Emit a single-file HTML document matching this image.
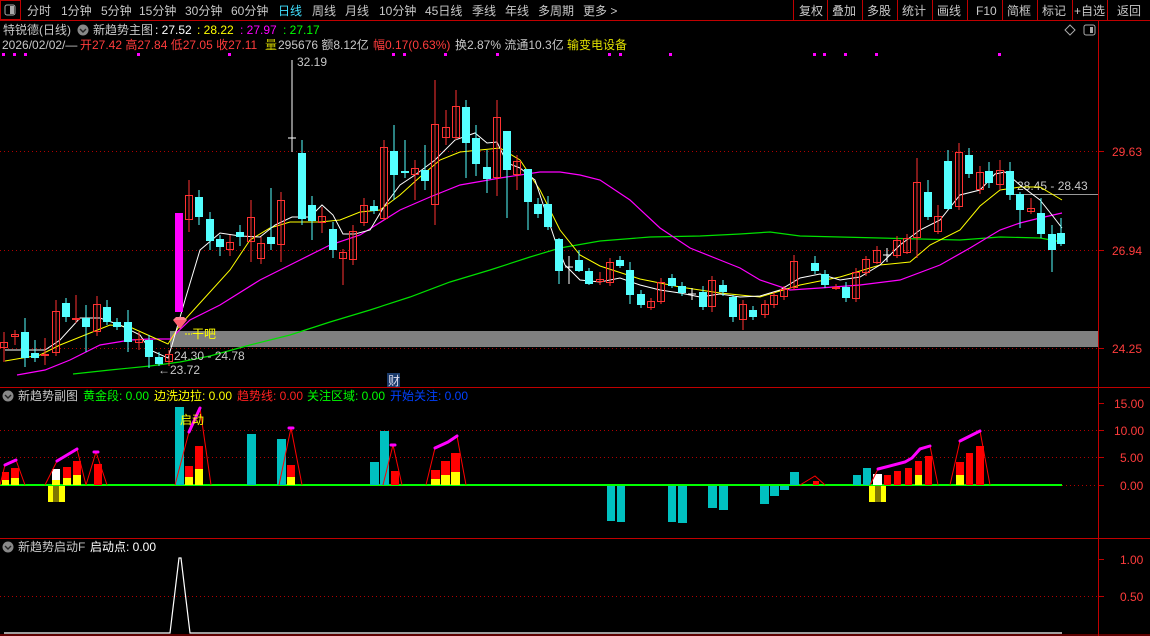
<!DOCTYPE html>
<html><head><meta charset="utf-8"><style>
html,body{margin:0;padding:0;background:#000;width:1150px;height:636px;overflow:hidden}
svg{display:block}
text{font-family:"Liberation Sans","Noto Sans CJK SC",sans-serif;font-size:12px}
</style></head><body>
<svg width="1150" height="636" viewBox="0 0 1150 636" xmlns="http://www.w3.org/2000/svg">
<rect width="1150" height="636" fill="#000"/>
<rect x="0.5" y="0.5" width="20" height="19" fill="none" stroke="#c00000"/>
<rect x="5" y="5" width="10" height="10" rx="2" fill="none" stroke="#aaa"/><rect x="10" y="6" width="4" height="8" fill="#aaa"/>
<line x1="0" y1="20.5" x2="1150" y2="20.5" stroke="#c00000"/>
<g fill="#c8c8c8">
<text x="27" y="15">分时</text><text x="61" y="15">1分钟</text><text x="101" y="15">5分钟</text><text x="139" y="15">15分钟</text><text x="185" y="15">30分钟</text><text x="231" y="15">60分钟</text>
<text x="278" y="15" fill="#40e0ff">日线</text><text x="312" y="15">周线</text><text x="345" y="15">月线</text><text x="379" y="15">10分钟</text><text x="425" y="15">45日线</text><text x="472" y="15">季线</text><text x="505" y="15">年线</text><text x="538" y="15">多周期</text><text x="583" y="15">更多 &gt;</text>
<text x="799" y="15">复权</text><text x="832" y="15">叠加</text><text x="867" y="15">多股</text><text x="902" y="15">统计</text><text x="937" y="15">画线</text><text x="976" y="15">F10</text><text x="1007" y="15">简框</text><text x="1042" y="15">标记</text><text x="1074" y="15">+自选</text><text x="1117" y="15">返回</text>
</g>
<g stroke="#c00000"><line x1="793.5" y1="0" x2="793.5" y2="20"/><line x1="827.5" y1="0" x2="827.5" y2="20"/><line x1="862.5" y1="0" x2="862.5" y2="20"/><line x1="897.5" y1="0" x2="897.5" y2="20"/><line x1="932.5" y1="0" x2="932.5" y2="20"/><line x1="967.5" y1="0" x2="967.5" y2="20"/><line x1="1002.5" y1="0" x2="1002.5" y2="20"/><line x1="1037.5" y1="0" x2="1037.5" y2="20"/><line x1="1072.5" y1="0" x2="1072.5" y2="20"/><line x1="1107.5" y1="0" x2="1107.5" y2="20"/></g>
<line x1="1098.5" y1="21" x2="1098.5" y2="636" stroke="#c00000"/>
<line x1="0" y1="387.5" x2="1150" y2="387.5" stroke="#c00000"/>
<line x1="0" y1="538.5" x2="1150" y2="538.5" stroke="#c00000"/>
<line x1="0" y1="635" x2="1150" y2="635" stroke="#c00000"/>
<g stroke="#b00000" stroke-dasharray="1 3">
<line x1="0" y1="151.5" x2="1098" y2="151.5"/><line x1="0" y1="250.5" x2="1098" y2="250.5"/><line x1="0" y1="348.5" x2="1098" y2="348.5"/>
<line x1="0" y1="430.5" x2="1098" y2="430.5"/><line x1="0" y1="457.5" x2="1098" y2="457.5"/><line x1="1062" y1="485.5" x2="1098" y2="485.5"/>
<line x1="0" y1="596.5" x2="1098" y2="596.5"/>
</g>
<g stroke="#c00000"><line x1="1098" y1="151.5" x2="1104" y2="151.5"/><line x1="1098" y1="250.5" x2="1104" y2="250.5"/><line x1="1098" y1="348.5" x2="1104" y2="348.5"/><line x1="1098" y1="403.5" x2="1104" y2="403.5"/><line x1="1098" y1="430.5" x2="1104" y2="430.5"/><line x1="1098" y1="457.5" x2="1104" y2="457.5"/><line x1="1098" y1="485.5" x2="1104" y2="485.5"/><line x1="1098" y1="559.5" x2="1104" y2="559.5"/><line x1="1098" y1="596.5" x2="1104" y2="596.5"/></g>
<g fill="#ff3c3c"><text x="1112" y="156">29.63</text><text x="1112" y="255">26.94</text><text x="1112" y="353">24.25</text><text x="1114" y="408">15.00</text><text x="1114" y="435">10.00</text><text x="1120" y="462">5.00</text><text x="1120" y="490">0.00</text><text x="1120" y="564">1.00</text><text x="1120" y="601">0.50</text></g>
<text x="3" y="34" fill="#c8c8c8">特锐德(日线)</text>
<circle cx="83" cy="30" r="5.5" fill="#888"/><path d="M80 29 L83 32 L86 29" stroke="#222" fill="none" stroke-width="1.4"/>
<text x="93" y="34" fill="#c8c8c8">新趋势主图</text>
<text x="155" y="34" fill="#fff">: 27.52</text><text x="197" y="34" fill="#ffff00">: 28.22</text><text x="240" y="34" fill="#ff00ff">: 27.97</text><text x="283" y="34" fill="#00ff00">: 27.17</text>
<path d="M1070 25 L1075 30 L1070 35 L1065 30 Z" fill="none" stroke="#aaa"/>
<rect x="1084" y="25" width="11" height="10" rx="2" fill="none" stroke="#aaa"/><rect x="1090" y="27" width="3" height="6" fill="#aaa"/>
<text x="2" y="49" fill="#c8c8c8">2026/02/02/—</text>
<text x="80" y="49" fill="#ff3c3c">开27.42 高27.84 低27.05 收27.11</text>
<text x="265" y="49" fill="#c8c800">量</text><text x="278" y="49" fill="#c8c8c8">295676 额8.12亿</text>
<text x="373" y="49" fill="#ff3c3c">幅0.17(0.63%)</text>
<text x="455" y="49" fill="#c8c8c8">换2.87% 流通10.3亿</text><text x="567" y="49" fill="#e0e000">输变电设备</text>
<g fill="#ff00ff"><rect x="2" y="53" width="3" height="3"/><rect x="13" y="53" width="3" height="3"/><rect x="24" y="53" width="3" height="3"/><rect x="137" y="53" width="3" height="3"/><rect x="228" y="53" width="3" height="3"/><rect x="392" y="53" width="3" height="3"/><rect x="403" y="53" width="3" height="3"/><rect x="444" y="53" width="3" height="3"/><rect x="496" y="53" width="3" height="3"/><rect x="608" y="53" width="3" height="3"/><rect x="619" y="53" width="3" height="3"/><rect x="669" y="53" width="3" height="3"/><rect x="813" y="53" width="3" height="3"/><rect x="823" y="53" width="3" height="3"/><rect x="844" y="53" width="3" height="3"/><rect x="875" y="53" width="3" height="3"/><rect x="998" y="53" width="3" height="3"/></g>
<rect x="170" y="331" width="928" height="16" fill="#808080"/>
<line x1="1012" y1="194.5" x2="1098" y2="194.5" stroke="#999"/>
<text x="1017" y="190" fill="#c8c8c8">28.45 - 28.43</text>
<polyline fill="none" stroke="#00e000" stroke-width="1.2" points="73,374 110,370 150,366 180,362 210,356 250,345 290,335 330,322 370,310 410,297 450,282 490,270 530,257 560,248 600,241 650,237 700,236 740,234 770,232 800,236 840,237 880,238 920,239 960,240 1000,237 1040,238 1062,242"/>
<polyline fill="none" stroke="#ff00ff" stroke-width="1.2" points="17,375 45,370 70,360 100,345 130,340 150,339 170,339 190,320 220,305 260,280 290,265 330,245 360,235 400,210 430,197 460,185 500,178 540,172 560,172 580,175 600,180 630,200 660,228 690,248 720,260 740,268 760,280 790,290 820,288 860,285 900,280 940,265 970,248 1000,230 1020,223 1040,218 1062,213"/>
<polyline fill="none" stroke="#ffff00" stroke-width="1" points="5,361 40,355 60,345 90,333 110,325 130,327 150,336 168,344 180,325 200,303 230,270 250,240 270,228 290,222 320,222 340,220 360,212 380,210 400,195 420,177 440,160 460,152 480,150 500,148 520,160 540,190 560,230 580,255 600,266 640,279 680,287 720,293 760,297 800,285 840,277 880,265 910,262 930,245 960,230 980,206 1000,190 1020,187 1040,187 1062,200"/>
<polyline fill="none" stroke="#fff" stroke-width="1" points="5,350 30,350 45,350 60,340 80,318 100,318 120,325 140,335 150,350 168,358 172,345 185,300 200,250 220,233 240,236 260,237 275,225 292,217 310,217 322,205 333,215 343,234 355,234 370,230 385,205 400,185 415,175 435,160 455,140 475,133 487,143 497,142 507,163 520,168 535,180 545,210 555,240 565,265 580,280 600,282 620,278 640,285 660,290 680,293 700,297 720,294 740,297 760,296 780,290 800,278 820,274 840,280 860,277 880,265 900,245 920,230 940,220 960,195 980,190 995,174 1005,172 1020,185 1040,200 1052,215 1062,228"/>
<g stroke="#ff3232" fill="none">
<path d="M4 332V362M15 330V345M45 338V365M56 300V356M76 295V323M97 296V336M139 332V350M169 350V366M189 180V232M230 235V256M251 200V262M261 237V264M281 192V262M322 207V233M343 249V285M353 225V265M364 198V226M384 140V220M415 160V200M435 80V225M446 110V145M456 90V140M497 100V196M517 155V190M600 272V285M610 258V286M651 298V310M661 278V304M712 276V312M743 300V330M765 300V318M774 292V308M784 286V300M794 255V290M836 284V290M856 268V302M866 256V276M877 246V264M897 236V258M907 234V254M917 158V258M938 205V234M959 143V210M980 166V194M1000 160V190M1031 198V214"/>
<rect x="0.5" y="342.5" width="7" height="5"/><rect x="11.5" y="334.5" width="7" height="2"/><rect x="41.5" y="354.5" width="7" height="1"/><rect x="52.5" y="311.5" width="7" height="41"/><rect x="72.5" y="318.5" width="7" height="1"/><rect x="93.5" y="304.5" width="7" height="27"/><rect x="135.5" y="339.5" width="7" height="3"/><rect x="165.5" y="354.5" width="7" height="7"/>
<rect x="185.5" y="195.5" width="7" height="24"/><rect x="226.5" y="242.5" width="7" height="7"/><rect x="247.5" y="217.5" width="7" height="24"/><rect x="257.5" y="243.5" width="7" height="15"/><rect x="277.5" y="200.5" width="7" height="44"/><rect x="318.5" y="216.5" width="7" height="6"/><rect x="339.5" y="252.5" width="7" height="6"/><rect x="349.5" y="231.5" width="7" height="28"/><rect x="360.5" y="205.5" width="7" height="17"/><rect x="380.5" y="147.5" width="7" height="71"/><rect x="411.5" y="168.5" width="7" height="6"/><rect x="431.5" y="124.5" width="7" height="80"/><rect x="442.5" y="127.5" width="7" height="10"/><rect x="452.5" y="106.5" width="7" height="31"/><rect x="493.5" y="117.5" width="7" height="60"/><rect x="513.5" y="161.5" width="7" height="13"/>
<rect x="596.5" y="279.5" width="7" height="2"/><rect x="606.5" y="262.5" width="7" height="20"/><rect x="647.5" y="301.5" width="7" height="6"/><rect x="657.5" y="282.5" width="7" height="19"/><rect x="708.5" y="280.5" width="7" height="26"/><rect x="739.5" y="304.5" width="7" height="15"/><rect x="761.5" y="304.5" width="7" height="10"/><rect x="770.5" y="295.5" width="7" height="9"/><rect x="780.5" y="289.5" width="7" height="7"/><rect x="790.5" y="261.5" width="7" height="26"/><rect x="832.5" y="287.5" width="7" height="1"/><rect x="852.5" y="272.5" width="7" height="26"/><rect x="862.5" y="259.5" width="7" height="13"/><rect x="873.5" y="250.5" width="7" height="12"/><rect x="893.5" y="240.5" width="7" height="15"/><rect x="903.5" y="238.5" width="7" height="14"/><rect x="913.5" y="182.5" width="7" height="55"/><rect x="934.5" y="216.5" width="7" height="15"/><rect x="955.5" y="152.5" width="7" height="54"/><rect x="976.5" y="172.5" width="7" height="17"/><rect x="996.5" y="170.5" width="7" height="14"/><rect x="1027.5" y="208.5" width="7" height="3"/>
</g>
<g stroke="#54ffff" fill="#54ffff">
<path d="M25 318V367M35 340V362M66 298V322M86 305V352M107 300V325M117 318V330M128 310V352M149 335V368M159 352V366M199 190V225M210 212V250M220 235V256M240 225V246M271 188V250M302 140V225M312 196V240M333 222V258M374 200V214M394 125V200M405 140V178M425 145V190M466 100V178M476 125V176M487 150V193M507 160V218M528 190V230M538 198V218M548 196V230M559 238V284M579 250V272M589 268V285M620 256V268M630 262V304M641 290V308M672 274V288M682 282V296M703 286V310M723 280V296M733 295V322M753 306V320M815 256V274M825 270V288M846 282V302M928 180V220M948 150V210M969 148V178M989 162V188M1010 162V200M1020 192V228M1041 198V238M1052 225V272M1061 218V246"/>
<rect x="21.5" y="332.5" width="7" height="25"/><rect x="31.5" y="353.5" width="7" height="4"/><rect x="62.5" y="303.5" width="7" height="13"/><rect x="82.5" y="318.5" width="7" height="8"/><rect x="103.5" y="307.5" width="7" height="14"/><rect x="113.5" y="322.5" width="7" height="4"/><rect x="124.5" y="322.5" width="7" height="19"/><rect x="145.5" y="340.5" width="7" height="16"/><rect x="155.5" y="357.5" width="7" height="6"/>
<rect x="195.5" y="197.5" width="7" height="19"/><rect x="206.5" y="219.5" width="7" height="21"/><rect x="216.5" y="239.5" width="7" height="7"/><rect x="236.5" y="232.5" width="7" height="4"/><rect x="267.5" y="237.5" width="7" height="6"/><rect x="298.5" y="153.5" width="7" height="65"/><rect x="308.5" y="205.5" width="7" height="15"/><rect x="329.5" y="229.5" width="7" height="20"/><rect x="370.5" y="206.5" width="7" height="4"/><rect x="390.5" y="151.5" width="7" height="23"/><rect x="401.5" y="171.5" width="7" height="1"/><rect x="421.5" y="170.5" width="7" height="10"/><rect x="462.5" y="107.5" width="7" height="35"/><rect x="472.5" y="138.5" width="7" height="25"/><rect x="483.5" y="167.5" width="7" height="11"/><rect x="503.5" y="131.5" width="7" height="38"/><rect x="524.5" y="169.5" width="7" height="32"/><rect x="534.5" y="204.5" width="7" height="9"/><rect x="544.5" y="204.5" width="7" height="22"/><rect x="555.5" y="239.5" width="7" height="31"/><rect x="575.5" y="260.5" width="7" height="10"/><rect x="585.5" y="271.5" width="7" height="12"/><rect x="616.5" y="260.5" width="7" height="5"/><rect x="626.5" y="270.5" width="7" height="24"/><rect x="637.5" y="294.5" width="7" height="10"/><rect x="668.5" y="278.5" width="7" height="7"/><rect x="678.5" y="286.5" width="7" height="6"/><rect x="699.5" y="292.5" width="7" height="14"/><rect x="719.5" y="285.5" width="7" height="6"/><rect x="729.5" y="297.5" width="7" height="19"/><rect x="749.5" y="310.5" width="7" height="6"/><rect x="811.5" y="263.5" width="7" height="7"/><rect x="821.5" y="274.5" width="7" height="10"/><rect x="842.5" y="287.5" width="7" height="10"/><rect x="924.5" y="192.5" width="7" height="24"/><rect x="944.5" y="161.5" width="7" height="47"/><rect x="965.5" y="155.5" width="7" height="18"/><rect x="985.5" y="171.5" width="7" height="11"/><rect x="1006.5" y="171.5" width="7" height="23"/><rect x="1016.5" y="194.5" width="7" height="15"/><rect x="1037.5" y="213.5" width="7" height="20"/><rect x="1048.5" y="234.5" width="7" height="15"/><rect x="1057.5" y="233.5" width="7" height="10"/>
</g>
<g stroke="#fff"><path d="M292 60V152M288 138H296M569 256V284M565 267H573M692 288V300M688 294H696M887 248V262M883 255H891"/></g>
<rect x="175" y="213" width="8" height="99" fill="#ff00ff"/>
<path d="M173 320 L187 320 L180 329 Z" fill="#ff6070"/><path d="M173 320 L176 317 L184 317 L187 320" fill="#ff8090"/>
<line x1="185" y1="334" x2="192" y2="334" stroke="#ffff00" stroke-dasharray="2 1"/>
<text x="192" y="338" fill="#ffff00">干吧</text>
<text x="174" y="360" fill="#c8c8c8">24.30 - 24.78</text>
<text x="158" y="374" fill="#c8c8c8">←23.72</text>
<text x="297" y="66" fill="#c8c8c8">32.19</text>
<rect x="387" y="373" width="13" height="14" fill="#1a3a6a"/><text x="388" y="385" fill="#dde">财</text>
<circle cx="8" cy="396" r="5.5" fill="#888"/><path d="M5 395 L8 398 L11 395" stroke="#222" fill="none" stroke-width="1.4"/>
<text x="18" y="400" fill="#c8c8c8">新趋势副图</text>
<text x="83" y="400" fill="#00ff00">黄金段: 0.00</text>
<text x="154" y="400" fill="#ffff00">边洗边拉: 0.00</text>
<text x="237" y="400" fill="#ff2020">趋势线: 0.00</text>
<text x="307" y="400" fill="#00ff00">关注区域: 0.00</text>
<text x="390" y="400" fill="#0040ff">开始关注: 0.00</text>
<line x1="0" y1="485" x2="1062" y2="485" stroke="#00ff00" stroke-width="2"/>
<g fill="#00c0c0">
<rect x="175" y="407" width="9" height="78"/><rect x="247" y="434" width="9" height="51"/><rect x="277" y="439" width="9" height="46"/><rect x="370" y="462" width="9" height="23"/><rect x="380" y="431" width="9" height="54"/>
<rect x="607" y="486" width="8" height="35"/><rect x="617" y="486" width="8" height="36"/><rect x="668" y="486" width="8" height="36"/><rect x="678" y="486" width="9" height="37"/><rect x="708" y="486" width="9" height="22"/><rect x="719" y="486" width="9" height="24"/><rect x="760" y="486" width="9" height="18"/><rect x="770" y="486" width="9" height="10"/><rect x="780" y="486" width="9" height="4"/><rect x="790" y="472" width="9" height="13"/><rect x="853" y="475" width="8" height="10"/><rect x="863" y="468" width="8" height="17"/>
</g>
<g fill="#ff0000">
<rect x="2" y="472" width="7" height="8"/><rect x="11" y="468" width="8" height="10"/><rect x="63" y="467" width="8" height="11"/><rect x="73" y="461" width="8" height="14"/><rect x="94" y="464" width="8" height="21"/><rect x="185" y="466" width="8" height="11"/><rect x="195" y="446" width="8" height="23"/><rect x="287" y="465" width="8" height="12"/><rect x="391" y="471" width="8" height="14"/><rect x="431" y="470" width="9" height="9"/><rect x="441" y="461" width="9" height="14"/><rect x="451" y="453" width="9" height="19"/>
<rect x="813" y="481" width="6" height="4"/><rect x="884" y="475" width="7" height="10"/><rect x="894" y="471" width="7" height="14"/><rect x="905" y="468" width="7" height="17"/><rect x="915" y="461" width="7" height="14"/><rect x="925" y="456" width="7" height="29"/><rect x="956" y="462" width="8" height="13"/><rect x="966" y="453" width="7" height="32"/><rect x="976" y="446" width="8" height="39"/>
</g>
<g fill="#ffff00">
<rect x="2" y="480" width="7" height="5"/><rect x="11" y="478" width="8" height="7"/><rect x="52" y="480" width="8" height="5"/><rect x="63" y="478" width="8" height="7"/><rect x="73" y="475" width="8" height="10"/><rect x="185" y="477" width="8" height="8"/><rect x="195" y="469" width="8" height="16"/><rect x="287" y="477" width="8" height="8"/><rect x="431" y="479" width="9" height="6"/><rect x="441" y="475" width="9" height="10"/><rect x="451" y="472" width="9" height="13"/><rect x="915" y="475" width="7" height="10"/><rect x="956" y="475" width="8" height="10"/>
<rect x="48" y="486" width="17" height="16"/><rect x="869" y="486" width="17" height="16"/>
</g>
<rect x="53" y="486" width="6" height="16" fill="#807800"/><rect x="875" y="486" width="6" height="16" fill="#807800"/>
<rect x="52" y="469" width="8" height="11" fill="#fff"/><rect x="873" y="474" width="9" height="11" fill="#fff"/>
<g stroke="#ff0000" fill="none" stroke-width="1">
<path d="M0 485 L5 465 M16 460 L25 485"/><path d="M45 485 L57 461 M77 449 L86 485"/><path d="M86 485 L96 452 L107 485"/><path d="M175 485 L189 432 M200 408 L211 485"/><path d="M279 485 L291 428 L302 485"/><path d="M383 485 L393 445 L402 485"/><path d="M426 485 L435 448 M457 436 L466 485"/><path d="M800 485 L815 476 L825 485"/><path d="M870 485 L878 469 M930 446 L938 485"/><path d="M950 485 L960 441 M980 431 L990 485"/>
</g>
<g stroke="#ff00ff" fill="none" stroke-width="3" stroke-linecap="round">
<path d="M5 465 L16 460"/><path d="M57 461 L77 449"/><path d="M94 452 L98 452"/><path d="M189 432 L200 408"/><path d="M289 428 L293 428"/><path d="M391 445 L395 445"/><path d="M435 448 L448 442 L457 436"/><path d="M878 469 L905 462 L912 458 L920 449 L930 446"/><path d="M960 441 L970 436 L980 431"/>
</g>
<text x="180" y="424" fill="#ffff00">启动</text>
<circle cx="8" cy="547" r="5.5" fill="#888"/><path d="M5 546 L8 549 L11 546" stroke="#222" fill="none" stroke-width="1.4"/>
<text x="18" y="551" fill="#c8c8c8">新趋势启动F</text>
<text x="90" y="551" fill="#fff">启动点: 0.00</text>
<polyline fill="none" stroke="#fff" stroke-width="1.2" points="4,633 170,633 179,558 181,558 190,633 1062,633"/>
</svg>
</body></html>
